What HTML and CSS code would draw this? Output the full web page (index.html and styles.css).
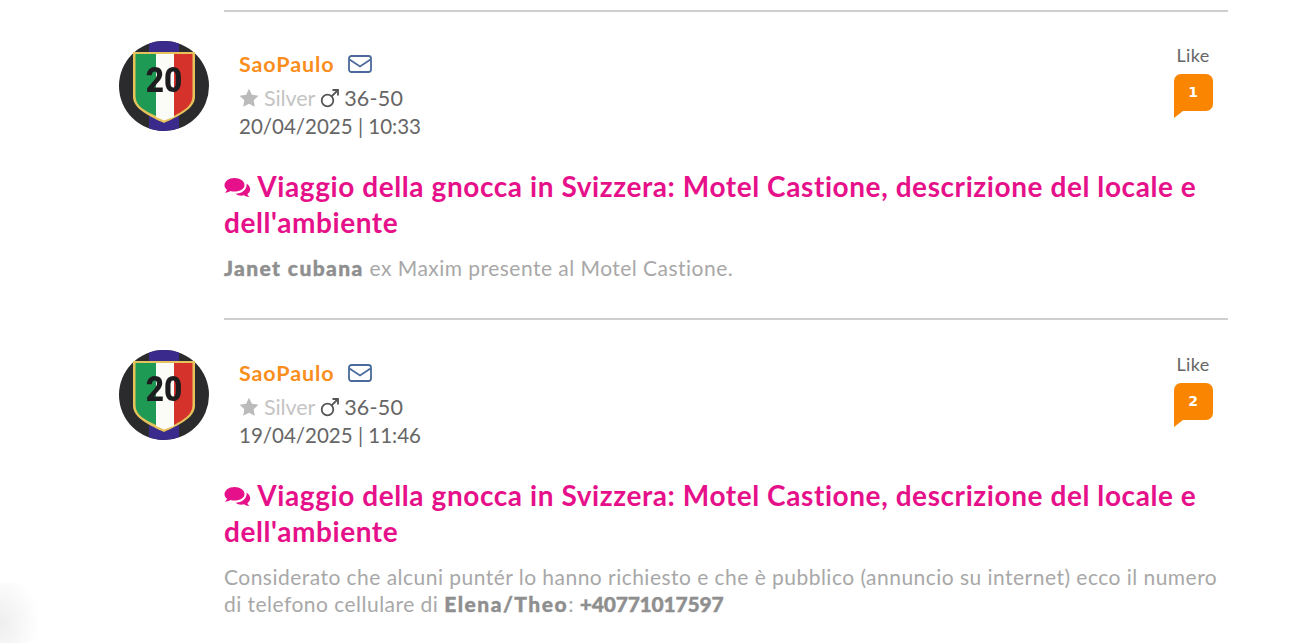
FILE: index.html
```
<!DOCTYPE html>
<html lang="it">
<head>
<meta charset="utf-8">
<title>Viaggio della gnocca in Svizzera</title>
<link rel="stylesheet" href="styles.css">
</head>
<body>
<svg class="defs" width="0" height="0" aria-hidden="true">
  <defs>
    <clipPath id="disc"><circle cx="45" cy="45" r="45"/></clipPath>
    <g id="badge">
      <g clip-path="url(#disc)">
        <rect width="90" height="90" fill="#2b2b2d"/>
        <rect x="30" width="30" height="90" fill="#3a2a8c"/>
      </g>
      <path d="M14 11H76V56C76 68 58 76 45 82C32 76 14 68 14 56Z" fill="#e6c25a"/>
      <path d="M16.500 13H37V75C26 70 16.500 65 16.500 55Z" fill="#1f9a55"/>
      <path d="M37 13H55V76L45 79.500L37 76Z" fill="#fbfbf8"/>
      <path d="M55 13H73.500V55C73.500 65 64 70 55 75Z" fill="#d5322c"/>
    </g>
    <g id="star"><path d="M10 0.8L12.9 6.8L19.4 7.7L14.7 12.2L15.8 18.8L10 15.7L4.2 18.8L5.3 12.2L.6 7.7L7.1 6.8Z"/></g>
    <g id="mars" fill="none" stroke="#555" stroke-width="1.8"><circle cx="7.5" cy="12.5" r="5.8"/><path d="M11.6 8.4L18 2M12.5 2H18V7.5"/></g>
    <g id="mail" fill="none" stroke="#4a6a9c" stroke-width="1.8"><rect x="1" y="1" width="22" height="16" rx="2.5"/><path d="M1.5 4.5L12 11.5L22.5 4.5"/></g>
    <g id="chat"><path d="M10.5 1C4.9 1 .5 4.2 .5 8.2C.5 10 1.4 11.5 3 12.8C2.6 14 1.8 15 .8 15.8C3 15.7 4.900 14.900 6.300 14C7.600 14.400 9 14.600 10.500 14.600C16 14.600 20.500 11.900 20.500 8C20.500 4.200 16 1 10.500 1Z"/><path d="M22.500 6.500C22.600 7 22.600 7.500 22.600 8C22.600 12.800 17.800 16.500 11.500 16.800C13 18 15 18.700 17.200 18.700C18.200 18.700 19.200 18.500 20.100 18.300C21.400 19.200 23 19.900 25.500 20C24.500 19.200 23.800 18.200 23.400 17.200C25.100 15.900 26.200 14.200 26.200 12.300C26.200 10 24.700 8 22.500 6.500Z"/></g>
  </defs>
</svg>
<main class="feed">
  <article class="post">
    <header class="post-head">
      <div class="avatar-wrap">
        <svg class="avatar" viewBox="0 0 90 90" role="img" aria-label="SaoPaulo"><use href="#badge"/></svg>
        <span class="avatar-num">20</span>
      </div>
      <div class="author">
        <div class="name-row"><span class="name">SaoPaulo</span><svg class="mail" viewBox="0 0 24 18"><use href="#mail"/></svg></div>
        <div class="rank-row"><svg class="star" viewBox="0 0 20 20"><use href="#star"/></svg><span class="rank">Silver</span><svg class="mars" viewBox="0 0 20 20"><use href="#mars"/></svg><span class="age">36-50</span></div>
        <div class="date">20/04/2025 | 10:33</div>
      </div>
      <div class="like">
        <span class="like-label">Like</span>
        <span class="like-count">1</span>
      </div>
    </header>
    <div class="post-body">
      <h2 class="title"><svg class="chat" viewBox="0 0 27 21"><use href="#chat"/></svg> Viaggio della gnocca in Svizzera: Motel Castione, descrizione del locale e dell'ambiente</h2>
      <p class="text"><b>Janet cubana</b> ex Maxim presente al Motel Castione.</p>
    </div>
  </article>
  <article class="post">
    <header class="post-head">
      <div class="avatar-wrap">
        <svg class="avatar" viewBox="0 0 90 90" role="img" aria-label="SaoPaulo"><use href="#badge"/></svg>
        <span class="avatar-num">20</span>
      </div>
      <div class="author">
        <div class="name-row"><span class="name">SaoPaulo</span><svg class="mail" viewBox="0 0 24 18"><use href="#mail"/></svg></div>
        <div class="rank-row"><svg class="star" viewBox="0 0 20 20"><use href="#star"/></svg><span class="rank">Silver</span><svg class="mars" viewBox="0 0 20 20"><use href="#mars"/></svg><span class="age">36-50</span></div>
        <div class="date">19/04/2025 | 11:46</div>
      </div>
      <div class="like">
        <span class="like-label">Like</span>
        <span class="like-count">2</span>
      </div>
    </header>
    <div class="post-body">
      <h2 class="title"><svg class="chat" viewBox="0 0 27 21"><use href="#chat"/></svg> Viaggio della gnocca in Svizzera: Motel Castione, descrizione del locale e dell'ambiente</h2>
      <p class="text">Considerato che alcuni puntér lo hanno richiesto e che è pubblico (annuncio su internet) ecco il numero di telefono cellulare di <b class="who">Elena/Theo</b>: <b class="phone">+40771017597</b></p>
    </div>
  </article>
</main>
<div class="corner-glow"></div>
</body>
</html>
```
FILE: styles.css
```
html, body { margin: 0; padding: 0; height: 100%; overflow: hidden; background: #fff; }
body { font-family: "Lato", "Open Sans", sans-serif; color: #555; position: relative; }
.defs { position: absolute; }
.feed { padding: 10px 78px 0 119px; }
.post { height: 309px; box-sizing: border-box; }
.post-head { display: flex; align-items: flex-start; height: 142px; padding-top: 31px; box-sizing: border-box; }
.post::before { content: ""; display: block; height: 2px; margin-left: 105px; background: #cfcfcf; margin-bottom: -2px; }
.post + .post::before { transform: translateY(-1px); }
.avatar-wrap { position: relative; width: 90px; height: 90px; flex: none; filter: blur(.5px); }
.avatar { display: block; width: 90px; height: 90px; }
.avatar-num { position: absolute; left: 0; right: 0; top: 20px; text-align: center; font: 900 35px/40px "Roboto", sans-serif; color: #1d1d1f; transform: scaleX(.9); }
.author { margin-left: 30px; padding-top: 9px; flex: 1; }
.name-row { display: flex; align-items: center; height: 28px; gap: 13px; }
.name { color: #f98e1d; font-weight: 700; font-size: 21.5px; letter-spacing: .9px; }
.mail { width: 24px; height: 18px; }
.rank-row { display: flex; align-items: center; height: 28px; margin-top: 6px; font-size: 21.5px; color: #666; }
.star { width: 20px; height: 20px; fill: #bbb; margin-right: 5px; }
.rank { color: #c4c4c4; letter-spacing: -.1px; }
.mars { width: 20px; height: 20px; margin: 0 4px 0 5px; }
.age { letter-spacing: .2px; }
.date { font-size: 20.5px; line-height: 28px; color: #666; }
.like { width: 40px; margin-right: 15px; display: flex; flex-direction: column; align-items: center; padding-top: 2px; }
.like-label { font-size: 18px; line-height: 24px; letter-spacing: .3px; color: #666; }
.like-count { display: block; position: relative; margin-top: 7px; width: 39px; height: 37px; border-radius: 7px 7px 7px 0; background: #f98500; color: #fff; font: 700 14px/37px "DejaVu Sans", sans-serif; text-align: center; }
.like-count::after { content: ""; position: absolute; left: 0; top: 37px; border-top: 7px solid #f98500; border-right: 9px solid transparent; }
.post-body { margin-left: 105px; padding-top: 16px; }
.title { margin: 0; font-size: 28px; line-height: 36px; font-weight: 700; letter-spacing: .58px; color: #e6118a; }
.chat { width: 27px; height: 21px; fill: #e6118a; vertical-align: -1px; }
.text { margin: 14px 0 0; font-size: 21px; line-height: 27px; letter-spacing: .47px; color: #a8a8a8; }
.text b { font-weight: 900; letter-spacing: 1.4px; color: #8f8f8f; -webkit-text-stroke: .4px #8f8f8f; }
.text .who { letter-spacing: 1.5px; }
.text .phone { letter-spacing: -.2px; }
.corner-glow { position: absolute; left: 0; bottom: 0; width: 40px; height: 60px; background: radial-gradient(40px 50px at 0 40px, #eee, #fff); }
```
